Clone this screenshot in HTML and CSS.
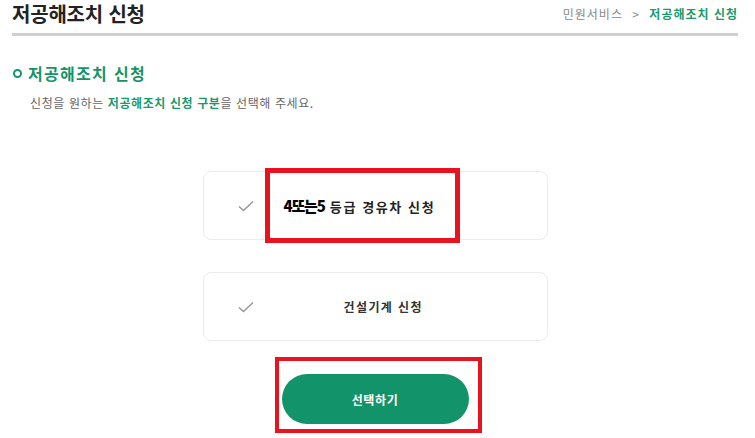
FILE: index.html
```html
<!DOCTYPE html>
<html lang="ko">
<head>
<meta charset="utf-8">
<link rel="stylesheet" href="styles.css">
</head>
<body>
<div class="page">
  <header class="top">
    <h1 class="title">저공해조치 신청</h1>
    <nav class="crumb">민원서비스 <span class="sep">&gt;</span> <span class="cur">저공해조치 신청</span></nav>
  </header>
  <h2 class="sec"><span class="ring"></span>저공해조치 신청</h2>
  <p class="desc">신청을 원하는 <b class="hl">저공해조치 신청 구분</b>을 선택해 주세요.</p>
  <div class="choices">
    <div class="card card-a">
      <svg class="chk" width="16" height="12" viewBox="0 0 16 12"><path d="M1 6.5 L5.5 10.5 L15 1.5" fill="none" stroke="#9a9a9a" stroke-width="1.6"/></svg>
      <span class="lbl lbl-a"><b class="big">4또는5</b> 등급 경유차 신청</span>
    </div>
    <div class="card card-b">
      <svg class="chk" width="16" height="12" viewBox="0 0 16 12"><path d="M1 6.5 L5.5 10.5 L15 1.5" fill="none" stroke="#9a9a9a" stroke-width="1.6"/></svg>
      <span class="lbl lbl-b">건설기계 신청</span>
    </div>
    <button class="btn">선택하기</button>
  </div>
  <div class="mark mark-1"></div>
  <div class="mark mark-2"></div>
</div>
</body>
</html>
```
FILE: styles.css
```css
html, body {
  margin: 0;
  padding: 0;
  background: #fff;
}
body {
  font-family: "Noto Sans CJK KR", "Noto Sans", sans-serif;
  color: #333;
  width: 755px;
  height: 438px;
  overflow: hidden;
}
.page {
  position: relative;
  padding: 0 17px 0 12px;
}
.top {
  display: flex;
  align-items: center;
  justify-content: space-between;
  height: 33px;
  border-bottom: 3px solid #cfcfcf;
}
.title {
  margin: 0;
  font-size: 20px;
  font-weight: 700;
  color: #222;
  letter-spacing: -0.2px;
  line-height: 24px;
  padding-bottom: 6px;
}
.crumb {
  font-size: 12px;
  color: #888;
  padding-bottom: 6px;
  letter-spacing: 1px;
}
.crumb .sep { margin: 0 5px; }
.crumb .cur { color: #1a9a6c; font-weight: 700; }
.sec {
  display: flex;
  align-items: center;
  margin: 27px 0 0 1px;
  font-size: 16px;
  font-weight: 700;
  color: #15946a;
  line-height: 20px;
  letter-spacing: 1.3px;
}
.ring {
  width: 5px;
  height: 5px;
  border: 2.5px solid #15946a;
  border-radius: 50%;
  margin-right: 6px;
}
.desc {
  margin: 12px 0 0 18px;
  font-size: 12px;
  color: #666;
  line-height: 16px;
  letter-spacing: 0.6px;
}
.hl { color: #1a9a6c; font-weight: 700; }
.choices {
  display: flex;
  flex-direction: column;
  align-items: center;
  margin-top: 60px;
}
.card {
  box-sizing: border-box;
  width: 345px;
  height: 69px;
  border: 1.5px solid #ececec;
  border-radius: 8px;
  display: flex;
  align-items: center;
  padding-left: 34px;
}
.card-b { margin-top: 32px; }
.chk { flex: none; }
.lbl {
  font-size: 12px;
  font-weight: 700;
  color: #333;
  white-space: nowrap;
}
.lbl-a { margin-left: 30px; color: #222; font-size: 13px; letter-spacing: 1.6px; }
.big { font-size: 15px; color: #000; letter-spacing: -1.2px; }
.lbl-b { margin-left: 90px; letter-spacing: 1.4px; }
.btn {
  margin-top: 33px;
  width: 187px;
  height: 50px;
  border: none;
  border-radius: 25px;
  background: #13936a;
  color: #fff;
  font-family: inherit;
  font-size: 12px;
  font-weight: 700;
  letter-spacing: 0.6px;
  padding: 0;
}
.mark {
  position: absolute;
  box-sizing: border-box;
  border: 5px solid #e8131f;
}
.mark-1 {
  left: 265px;
  top: 168px;
  width: 195px;
  height: 75px;
}
.mark-2 {
  left: 275px;
  top: 357px;
  width: 207px;
  height: 76px;
  border-width: 4px;
}
```
